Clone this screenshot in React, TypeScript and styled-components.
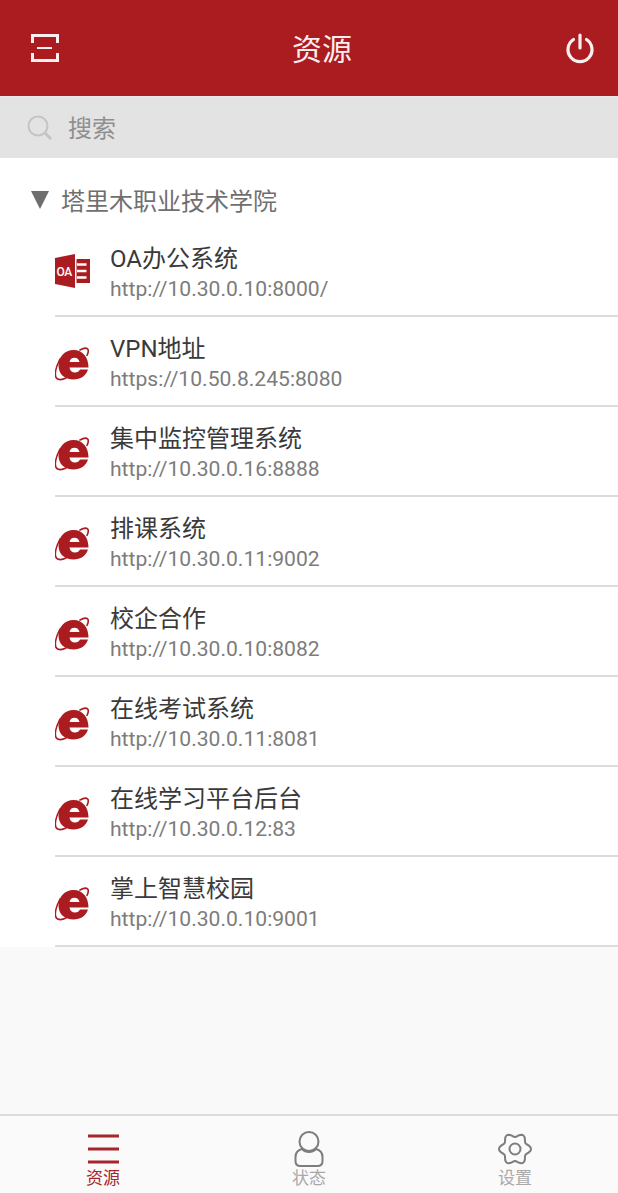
import React from "react";
import styled, { createGlobalStyle } from "styled-components";

const GlobalStyle = createGlobalStyle`
  html, body {
    margin: 0;
    padding: 0;
    background: #f9f9f9;
  }
  body {
    font-family: Roboto, "Noto Sans CJK SC", sans-serif;
  }
`;

const Page = styled.div`
  display: flex;
  flex-direction: column;
  width: 618px;
  height: 1193px;
  overflow: hidden;
  background: #f9f9f9;
`;

const Header = styled.header`
  display: flex;
  flex: none;
  align-items: center;
  justify-content: space-between;
  height: 96px;
  padding: 0 23px 0 31px;
  box-sizing: border-box;
  background: #ab1c21;
  color: #fbeeee;
`;

const HeaderTitle = styled.h1`
  margin: 4px 0 0 20px;
  font-size: 30px;
  font-weight: 400;
  line-height: 92px;
`;

const SearchBar = styled.div`
  display: flex;
  flex: none;
  align-items: center;
  gap: 15px;
  height: 62px;
  padding: 0 0 4px 27px;
  box-sizing: border-box;
  border-top: 2px solid #ebe5e3;
  background: #e3e3e3;
  color: #8f8f8f;
  font-size: 24px;

  svg {
    margin-top: 4px;
  }
`;

const List = styled.section`
  flex: none;
  background: #fff;
`;

const GroupTitle = styled.div`
  display: flex;
  align-items: center;
  gap: 12px;
  height: 69px;
  padding: 14px 0 0 31px;
  box-sizing: border-box;
  color: #6f6f6f;
  font-size: 24px;
`;

const Caret = styled.span`
  width: 0;
  height: 0;
  border-left: 9px solid transparent;
  border-right: 9px solid transparent;
  border-top: 18px solid #6e6e6e;
`;

const Row = styled.div`
  display: flex;
  align-items: center;
  height: 90px;
  margin-left: 55px;
  box-sizing: border-box;
  border-bottom: 2px solid #dcdcdc;
`;

const RowIcon = styled.div<{ $drop?: boolean }>`
  display: flex;
  flex: none;
  width: 55px;
  margin-top: ${(p) => (p.$drop ? "6px" : "0")};
`;

const RowText = styled.div`
  display: flex;
  flex-direction: column;
  margin-top: 3px;
`;

const RowTitle = styled.div`
  color: #3a3a3a;
  font-size: 24px;
  line-height: 32px;
`;

const RowUrl = styled.div`
  color: #7c7c7c;
  font-size: 21.1px;
  line-height: 28px;
`;

const TabBar = styled.nav`
  display: grid;
  flex: none;
  grid-template-columns: repeat(3, 1fr);
  height: 79px;
  margin-top: auto;
  box-sizing: border-box;
  border-top: 2px solid #dcdcdc;
  background: #fafafa;
`;

const Tab = styled.div<{ $active?: boolean }>`
  display: flex;
  flex-direction: column;
  align-items: center;
  padding-top: 15px;
  color: ${(p) => (p.$active ? "#a3272c" : "#a9a9a9")};
  font-size: 17px;
  line-height: 22px;
`;

const TabIcon = styled.div`
  display: flex;
  align-items: center;
  justify-content: center;
  height: 36px;
`;

const sites = [
  { name: "OA办公系统", url: "http://10.30.0.10:8000/", office: true },
  { name: "VPN地址", url: "https://10.50.8.245:8080" },
  { name: "集中监控管理系统", url: "http://10.30.0.16:8888" },
  { name: "排课系统", url: "http://10.30.0.11:9002" },
  { name: "校企合作", url: "http://10.30.0.10:8082" },
  { name: "在线考试系统", url: "http://10.30.0.11:8081" },
  { name: "在线学习平台后台", url: "http://10.30.0.12:83" },
  { name: "掌上智慧校园", url: "http://10.30.0.10:9001" },
];

// wavy outline of the settings gear: six soft lobes
const gearPoints = Array.from({ length: 72 }, (_, i) => {
  const a = (i * 5 * Math.PI) / 180;
  const r = 14 + 2 * Math.cos(6 * a);
  return `${(17 + r * Math.cos(a)).toFixed(2)},${(17 + r * Math.sin(a)).toFixed(2)}`;
}).join(" ");

function ScanIcon() {
  return (
    <svg width="28" height="28" viewBox="0 0 28 28" fill="none" stroke="currentColor">
      <path d="M1.5 9V1.5H26.5V9M1.5 19V26.5H26.5V19" strokeWidth="3" />
      <path d="M6 14H21" strokeWidth="2" />
    </svg>
  );
}

function PowerIcon() {
  return (
    <svg width="30" height="32" viewBox="0 0 30 32" fill="none" stroke="currentColor" strokeWidth="3.2" strokeLinecap="round">
      <path d="M15 3V16" />
      <path d="M8.5 7.5A12 12 0 1 0 21.5 7.5" />
    </svg>
  );
}

function SearchIcon() {
  return (
    <svg width="26" height="26" viewBox="0 0 26 26" fill="none" stroke="#c4c4c4" strokeWidth="2">
      <circle cx="11" cy="11" r="9.5" />
      <path d="M18 18L24 24" strokeWidth="3" />
    </svg>
  );
}

function OfficeIcon() {
  return (
    <svg width="35" height="34" viewBox="0 0 35 34">
      <path d="M0 4L20 0V34L0 30Z" fill="#ab1c21" />
      <path d="M21.5 5H35V29H21.5Z" fill="#ab1c21" />
      <path d="M22 10.5H31.5M22 17H31.5M22 23.5H31.5" stroke="#fff" strokeWidth="2.6" />
      <text x="1.5" y="21.5" fontSize="12" fontWeight="500" fill="#fff" fontFamily="Roboto, sans-serif" letterSpacing="-0.3">
        OA
      </text>
    </svg>
  );
}

function IeIcon() {
  return (
    <svg width="34" height="34" viewBox="0 0 34 34" fill="none">
      <path
        d="M3.5 18.5C3.5 9.5 10 3 18.5 3C28 3 33.5 10.5 33.5 20.5H14.5C15 24 17 25.5 20 25.5C22.5 25.5 24 24.5 25 22.5H33C31 29 25.5 32.5 18.5 32.5C9.5 32.5 3.5 27 3.5 18.5ZM14.5 15H24.5C24 12.3 22 10.8 19.3 10.8C16.8 10.8 15 12.3 14.5 15Z"
        fill="#ab1c21"
        fillRule="evenodd"
      />
      <path
        d="M25 3C28.5 1 31.5.8 32.7 2C33.6 3.2 33.4 5.5 32 8.5M5 12C1.5 19-.5 27 1 30.5C2.5 33.2 7 33.2 11 31"
        stroke="#ab1c21"
        strokeWidth="1.6"
        strokeLinecap="round"
      />
    </svg>
  );
}

function MenuIcon() {
  return (
    <svg width="31" height="30" viewBox="0 0 31 30" stroke="#a3272c" strokeWidth="3">
      <path d="M0 2H31M0 15H31M0 28H31" />
    </svg>
  );
}

function UserIcon() {
  return (
    <svg width="30" height="36" viewBox="0 0 30 36" fill="none" stroke="#7d7d7d" strokeWidth="2">
      <ellipse cx="15" cy="10.5" rx="9.5" ry="9.5" />
      <path d="M8 18C4 19 1.5 22 1.5 26V30C1.5 33 3.5 35 6.5 35H23.5C26.5 35 28.5 33 28.5 30V26C28.5 22 26 19 22 18C18 22 12 22 8 18Z" />
    </svg>
  );
}

function GearIcon() {
  return (
    <svg width="34" height="34" viewBox="0 0 34 34" fill="none" stroke="#7d7d7d" strokeWidth="2" strokeLinejoin="round">
      <polygon points={gearPoints} />
      <circle cx="17" cy="17" r="5.5" />
    </svg>
  );
}

export default function App() {
  return (
    <Page>
      <GlobalStyle />
      <Header>
        <ScanIcon />
        <HeaderTitle>资源</HeaderTitle>
        <PowerIcon />
      </Header>
      <SearchBar>
        <SearchIcon />
        搜索
      </SearchBar>
      <List>
        <GroupTitle>
          <Caret />
          塔里木职业技术学院
        </GroupTitle>
        {sites.map((site) => (
          <Row key={site.name}>
            <RowIcon $drop={!site.office}>{site.office ? <OfficeIcon /> : <IeIcon />}</RowIcon>
            <RowText>
              <RowTitle>{site.name}</RowTitle>
              <RowUrl>{site.url}</RowUrl>
            </RowText>
          </Row>
        ))}
      </List>
      <TabBar>
        <Tab $active>
          <TabIcon>
            <MenuIcon />
          </TabIcon>
          资源
        </Tab>
        <Tab>
          <TabIcon>
            <UserIcon />
          </TabIcon>
          状态
        </Tab>
        <Tab>
          <TabIcon>
            <GearIcon />
          </TabIcon>
          设置
        </Tab>
      </TabBar>
    </Page>
  );
}
